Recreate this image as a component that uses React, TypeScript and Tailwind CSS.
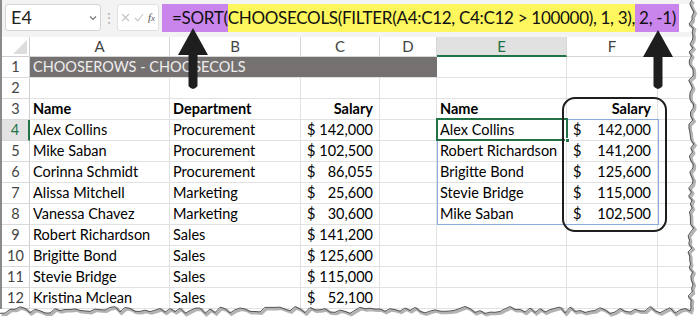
import React from "react";

const FONT = { fontFamily: "Lato, 'Noto Sans', sans-serif" };

type Cell = { t?: string; bold?: boolean; right?: boolean; money?: [string, string] };

const W = { h: "w-[30px]", A: "w-[140px]", B: "w-[131px]", C: "w-[79px]", D: "w-[57px]", E: "w-[130px]", F: "w-[91px]", G: "w-[42px]" };

const left: [string, string, string][] = [
  ["Alex Collins", "Procurement", "142,000"],
  ["Mike Saban", "Procurement", "102,500"],
  ["Corinna Schmidt", "Procurement", "86,055"],
  ["Alissa Mitchell", "Marketing", "25,600"],
  ["Vanessa Chavez", "Marketing", "30,600"],
  ["Robert Richardson", "Sales", "141,200"],
  ["Brigitte Bond", "Sales", "125,600"],
  ["Stevie Bridge", "Sales", "115,000"],
  ["Kristina Mclean", "Sales", "52,100"],
];

const right: [string, string][] = [
  ["Alex Collins", "142,000"],
  ["Robert Richardson", "141,200"],
  ["Brigitte Bond", "125,600"],
  ["Stevie Bridge", "115,000"],
  ["Mike Saban", "102,500"],
];

function C({ w, c, pad = "px-[3px]" }: { w: string; c?: Cell; pad?: string }) {
  return (
    <div
      className={`${w} h-[21px] shrink-0 border-r border-b border-[#e1e1e1] flex items-center ${pad} text-[14.5px] text-black whitespace-nowrap overflow-visible`}
    >
      {c?.money ? (
        <div className="flex w-full justify-between px-[4px]">
          <span>{c.money[0]}</span>
          <span>{c.money[1]}</span>
        </div>
      ) : c?.t ? (
        <span className={`${c.bold ? "font-bold" : ""} ${c.right ? "ml-auto pr-[3px]" : ""}`}>{c.t}</span>
      ) : null}
    </div>
  );
}

function RowHead({ n, sel }: { n: number; sel?: boolean }) {
  return (
    <div
      className={`w-[28px] h-[21px] shrink-0 flex items-center justify-center text-[14.5px] border-b border-[#dadada] ${
        sel ? "bg-[#e3e3e3] text-[#217346] border-r-2 border-r-[#217346]" : "bg-white text-[#444] border-r border-r-[#cfcfcf]"
      }`}
    >
      {n}
    </div>
  );
}

function makeTear() {
  let s = 12345;
  const rnd = () => {
    s = (s * 1103515245 + 12345) % 2147483648;
    return s / 2147483648;
  };
  const pts: [number, number][] = [];
  for (let y = 0; y <= 308; y += 4) pts.push([691 + (rnd() - 0.5) * 6, y]);
  for (let x = 690; x >= 0; x -= 5) pts.push([x, 310 + (rnd() - 0.5) * 7]);
  const line = pts.map((p, i) => `${i ? "L" : "M"}${p[0].toFixed(1)} ${p[1].toFixed(1)}`).join(" ");
  const fill = `M700 0 ${pts.map((p) => `L${p[0].toFixed(1)} ${p[1].toFixed(1)}`).join(" ")} L0 326 L700 326 Z`;
  return { line, fill };
}

function Arrow({ x, tip }: { x: number; tip: number }) {
  return (
    <path
      d={`M${x} ${tip} L${x + 15} ${tip + 27} L${x + 4.5} ${tip + 27} L${x + 4.5} 86 Q${x} 92 ${x - 4.5} 86 L${x - 4.5} ${tip + 27} L${x - 15} ${tip + 27} Z`}
      fill="#1e1e1e"
    />
  );
}

function Blank() {
  return (
    <>
      <C w={W.A} />
      <C w={W.B} />
      <C w={W.C} />
      <C w={W.D} />
      <C w={W.E} />
      <C w={W.F} />
      <C w={W.G} />
    </>
  );
}

export default function App() {
  const tear = makeTear();
  return (
    <div className="relative w-[700px] h-[326px] overflow-hidden bg-white" style={FONT}>
      <div className="flex flex-col border-l-2 border-[#8a8a8a]">
        {/* formula bar */}
        <div className="h-[37px] bg-[#f3f3f3] flex items-start pt-[4px] pl-[3px] shrink-0">
          <div className="w-[96px] h-[27px] shrink-0 bg-white border border-[#d4d4d4] rounded-[3px] flex items-center pl-[5px] pr-[3px] text-[18px] text-[#222]">
            <span>E4</span>
            <svg className="ml-auto" width="8" height="6" viewBox="0 0 8 6">
              <path d="M1 1.5 L4 4.5 L7 1.5" stroke="#777" strokeWidth="1.2" fill="none" />
            </svg>
          </div>
          <div className="w-[16px] h-[27px] shrink-0 flex items-center justify-center text-[#aaa] text-[12px]">⋮</div>
          <div className="w-[42px] h-[27px] shrink-0 bg-white border border-[#e0e0e0] rounded-[3px] flex items-center justify-center gap-[4px]">
            <svg width="9" height="9" viewBox="0 0 9 9">
              <path d="M1 1 L8 8 M8 1 L1 8" stroke="#c4c4c4" strokeWidth="1.1" />
            </svg>
            <svg width="10" height="9" viewBox="0 0 10 9">
              <path d="M1 5 L3.8 8 L9 1" stroke="#c4c4c4" strokeWidth="1.1" fill="none" />
            </svg>
            <span className="text-[11px] italic text-[#555]" style={{ fontFamily: "'Liberation Serif', serif" }}>
              f<span className="text-[9px]">x</span>
            </span>
          </div>
          <div className="ml-[3px] h-[28px] min-w-0 flex items-center text-[17px] tracking-[-0.3px] text-[#111] whitespace-nowrap bg-white flex-1 overflow-hidden">
            <span className="bg-[#ca85ed] h-full flex items-center pl-[10px] shrink-0">=SORT(</span>
            <span className="bg-[#fdf65c] h-full flex items-center shrink-0">CHOOSECOLS(FILTER(A4:C12, C4:C12 &gt; 100000), 1, 3),</span>
            <span className="bg-[#ca85ed] h-full flex items-center pl-[4px] pr-[3px] shrink-0">2, -1)</span>
          </div>
        </div>
        {/* column headers */}
        <div className="flex h-[20px] shrink-0 text-[15px] text-[#444]">
          <div className="w-[28px] h-[20px] bg-white border-r border-b border-[#cfcfcf] relative shrink-0">
            <svg className="absolute right-[2px] bottom-[2px]" width="14" height="14" viewBox="0 0 14 14">
              <path d="M14 0 L14 14 L0 14 Z" fill="#dcdcdc" />
            </svg>
          </div>
          {[
            ["A", W.A],
            ["B", W.B],
            ["C", W.C],
            ["D", W.D],
          ].map(([l, w]) => (
            <div key={l} className={`${w} h-[20px] shrink-0 flex items-center justify-center border-r border-b border-[#d6d6d6] bg-white`}>
              {l}
            </div>
          ))}
          <div className={`${W.E} h-[20px] shrink-0 flex items-center justify-center bg-[#e1e1e1] text-[#217346] border-r border-[#d6d6d6] border-b-2 border-b-[#217346]`}>
            E
          </div>
          <div className={`${W.F} h-[20px] shrink-0 flex items-center justify-center border-r border-b border-[#d6d6d6] bg-white`}>F</div>
          <div className={`${W.G} h-[20px] shrink-0 border-b border-[#d6d6d6] bg-white`} />
        </div>
        {/* row 1 */}
        <div className="flex">
          <RowHead n={1} />
          <div className="w-[407px] h-[21px] shrink-0 bg-[#767171] text-[#ededed] text-[14.5px] flex items-center pl-[3px] border-b border-[#e1e1e1]">
            CHOOSEROWS - CHOOSECOLS
          </div>
          <C w={W.E} />
          <C w={W.F} />
          <C w={W.G} />
        </div>
        {/* row 2 */}
        <div className="flex">
          <RowHead n={2} />
          <Blank />
        </div>
        {/* row 3 */}
        <div className="flex">
          <RowHead n={3} />
          <C w={W.A} c={{ t: "Name", bold: true }} />
          <C w={W.B} c={{ t: "Department", bold: true }} />
          <C w={W.C} c={{ t: "Salary", bold: true, right: true }} />
          <C w={W.D} />
          <C w={W.E} c={{ t: "Name", bold: true }} />
          <C w={W.F} c={{ t: "Salary", bold: true, right: true }} />
          <C w={W.G} />
        </div>
        {left.map((r, i) => {
          const rr = right[i];
          return (
            <div className="flex" key={i}>
              <RowHead n={i + 4} sel={i === 0} />
              <C w={W.A} c={{ t: r[0] }} />
              <C w={W.B} c={{ t: r[1] }} />
              <C w={W.C} c={{ money: ["$", r[2]] }} pad="px-[2px]" />
              <C w={W.D} />
              <C w={W.E} c={rr ? { t: rr[0] } : undefined} />
              <C w={W.F} c={rr ? { money: ["$", rr[1]] } : undefined} pad="px-[2px]" />
              <C w={W.G} />
            </div>
          );
        })}
      </div>

      {/* spill range + selection */}
      <div className="absolute left-[437px] top-[119px] w-[222px] h-[106px] border border-[#8eaadb] pointer-events-none" />
      <div className="absolute left-[436px] top-[118px] w-[132px] h-[23px] border-2 border-[#217346] pointer-events-none" />
      <div className="absolute left-[565px] top-[138px] w-[5px] h-[5px] bg-[#217346] border border-white" />

      {/* rounded highlight */}
      <div className="absolute left-[562px] top-[97px] w-[105px] h-[135px] border-2 border-[#1e1e1e] rounded-[13px] pointer-events-none" />

      {/* arrows + torn edge */}
      <svg className="absolute left-0 top-0 pointer-events-none" width="700" height="326" viewBox="0 0 700 326">
        <Arrow x={193} tip={28} />
        <Arrow x={658} tip={30} />
        <path d={tear.fill} fill="#ffffff" />
        <path d={tear.line} transform="translate(1.5 1.5)" stroke="#000" strokeOpacity="0.3" strokeWidth="3" fill="none" />
        <path d={tear.line} stroke="#555" strokeWidth="1" fill="none" />
      </svg>
    </div>
  );
}
